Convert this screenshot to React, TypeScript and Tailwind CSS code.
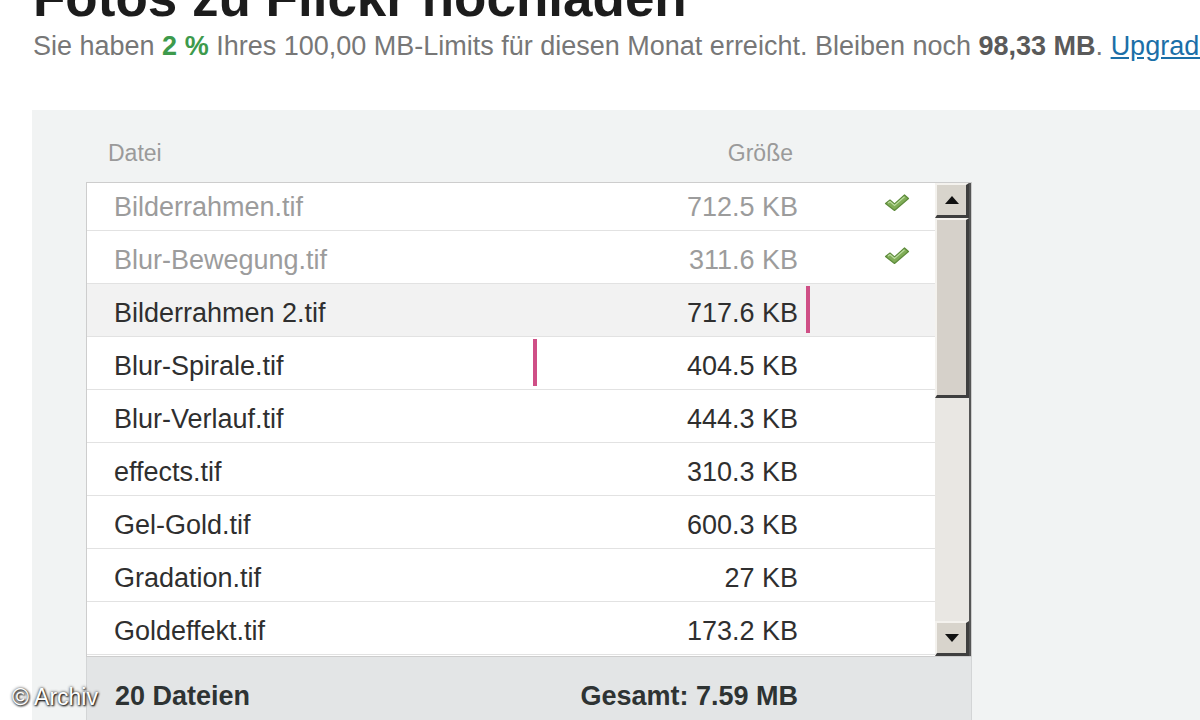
type FileRow = {
  name: string;
  size: string;
  done?: boolean;
  active?: boolean;
  marker?: string;
};

const files: FileRow[] = [
  { name: 'Bilderrahmen.tif', size: '712.5 KB', done: true },
  { name: 'Blur-Bewegung.tif', size: '311.6 KB', done: true },
  { name: 'Bilderrahmen 2.tif', size: '717.6 KB', active: true, marker: 'left-[719px]' },
  { name: 'Blur-Spirale.tif', size: '404.5 KB', marker: 'left-[446px]' },
  { name: 'Blur-Verlauf.tif', size: '444.3 KB' },
  { name: 'effects.tif', size: '310.3 KB' },
  { name: 'Gel-Gold.tif', size: '600.3 KB' },
  { name: 'Gradation.tif', size: '27 KB' },
  { name: 'Goldeffekt.tif', size: '173.2 KB' },
];

function Check() {
  return (
    <svg width="26" height="20" viewBox="0 0 26 20">
      <path
        d="M1.5 10.5 L6 7 L10.5 11 L20.5 2 L24.5 5.5 L10.5 17.5 Z"
        fill="#80ad57"
        stroke="#5d8b3b"
        strokeWidth="1.2"
        strokeLinejoin="round"
      />
      <path d="M4 10 L6 8.5 L10.5 12.5 L20.5 3.8" fill="none" stroke="#bcdca0" strokeWidth="1.2" />
    </svg>
  );
}

function Arrow({ down }: { down?: boolean }) {
  return (
    <svg width="14" height="8" viewBox="0 0 14 8">
      <polygon points={down ? '0,0 14,0 7,8' : '0,8 14,8 7,0'} fill="#111" />
    </svg>
  );
}

function ScrollButton({ down }: { down?: boolean }) {
  return (
    <div className="h-[35px] flex items-center justify-center bg-[#d8d4cc] border-t-2 border-l-2 border-t-[#f4f2ee] border-l-[#f4f2ee] border-r-[3px] border-b-[3px] border-r-[#3e3e3e] border-b-[#3e3e3e]">
      <Arrow down={down} />
    </div>
  );
}

export default function App() {
  return (
    <div className="relative w-[1200px] h-[720px] overflow-hidden bg-white font-['Liberation_Sans',Arial,sans-serif]">
      <h1 className="ml-[33px] -mt-[29px] text-[53px] leading-[53px] font-bold text-[#1c1c1c] whitespace-nowrap">
        Fotos zu Flickr hochladen
      </h1>
      <p className="ml-[33px] mt-[7px] text-[27px] leading-[30px] text-[#777] whitespace-nowrap">
        Sie haben <span className="font-bold text-[#3d9a4c]">2 %</span> Ihres 100,00 MB-Limits für diesen Monat
        erreicht. Bleiben noch <span className="font-bold text-[#5a5a5a]">98,33 MB</span>.{' '}
        <a className="text-[#1b6fa8] underline">Upgrade</a>
      </p>

      <div className="ml-[32px] mt-[49px] h-[700px] bg-[#f1f3f3] pl-[54px] pt-[31px]">
        <div className="w-[886px] flex pl-[22px] pr-[179px] text-[23px] leading-[24px] text-[#9a9a9a]">
          <span className="flex-1">Datei</span>
          <span>Größe</span>
        </div>

        <div className="mt-[17px] w-[886px] h-[475px] flex border border-[#cdcdcd] bg-white">
          <div className="flex-1 overflow-hidden">
            <div className="-mt-[5px]">
              {files.map((f) => (
                <div
                  key={f.name}
                  className={`relative h-[53px] flex pt-[14px] pl-[27px] text-[27px] leading-[30px] border-b border-[#e2e2e2] ${
                    f.active ? 'bg-[#f2f2f2]' : 'bg-white'
                  } ${f.done ? 'text-[#9c9c9c]' : 'text-[#2f2f2f]'}`}
                >
                  <span className="flex-1 whitespace-nowrap">{f.name}</span>
                  <span className="whitespace-nowrap">{f.size}</span>
                  <div className="w-[137px] flex pl-[86px] pt-[1px]">{f.done && <Check />}</div>
                  {f.marker && (
                    <span className={`absolute top-[2px] w-[4px] h-[47px] bg-[#cf4f86] ${f.marker}`} />
                  )}
                </div>
              ))}
            </div>
          </div>
          <div className="w-[36px] flex flex-col bg-[#e9e7e3] border-r-2 border-[#555]">
            <ScrollButton />
            <div className="h-[180px] bg-[#d6d1ca] border-t-2 border-l-2 border-t-[#f4f2ee] border-l-[#f4f2ee] border-r-[3px] border-b-[3px] border-r-[#3e3e3e] border-b-[#3e3e3e]" />
            <div className="flex-1" />
            <ScrollButton down />
          </div>
        </div>

        <div className="w-[886px] h-[200px] flex pl-[28px] pr-[173px] pt-[24px] bg-[#e3e5e6] border-x border-[#d3d5d6] text-[27px] leading-[30px] font-bold text-[#2e3333]">
          <span className="flex-1">20 Dateien</span>
          <span>Gesamt: 7.59 MB</span>
        </div>
      </div>

      <div className="absolute left-[12px] top-[683px] text-[23px] leading-[28px] text-white [text-shadow:1px_1px_2px_#000,0_0_3px_#222]">
        © Archiv
      </div>
    </div>
  );
}
